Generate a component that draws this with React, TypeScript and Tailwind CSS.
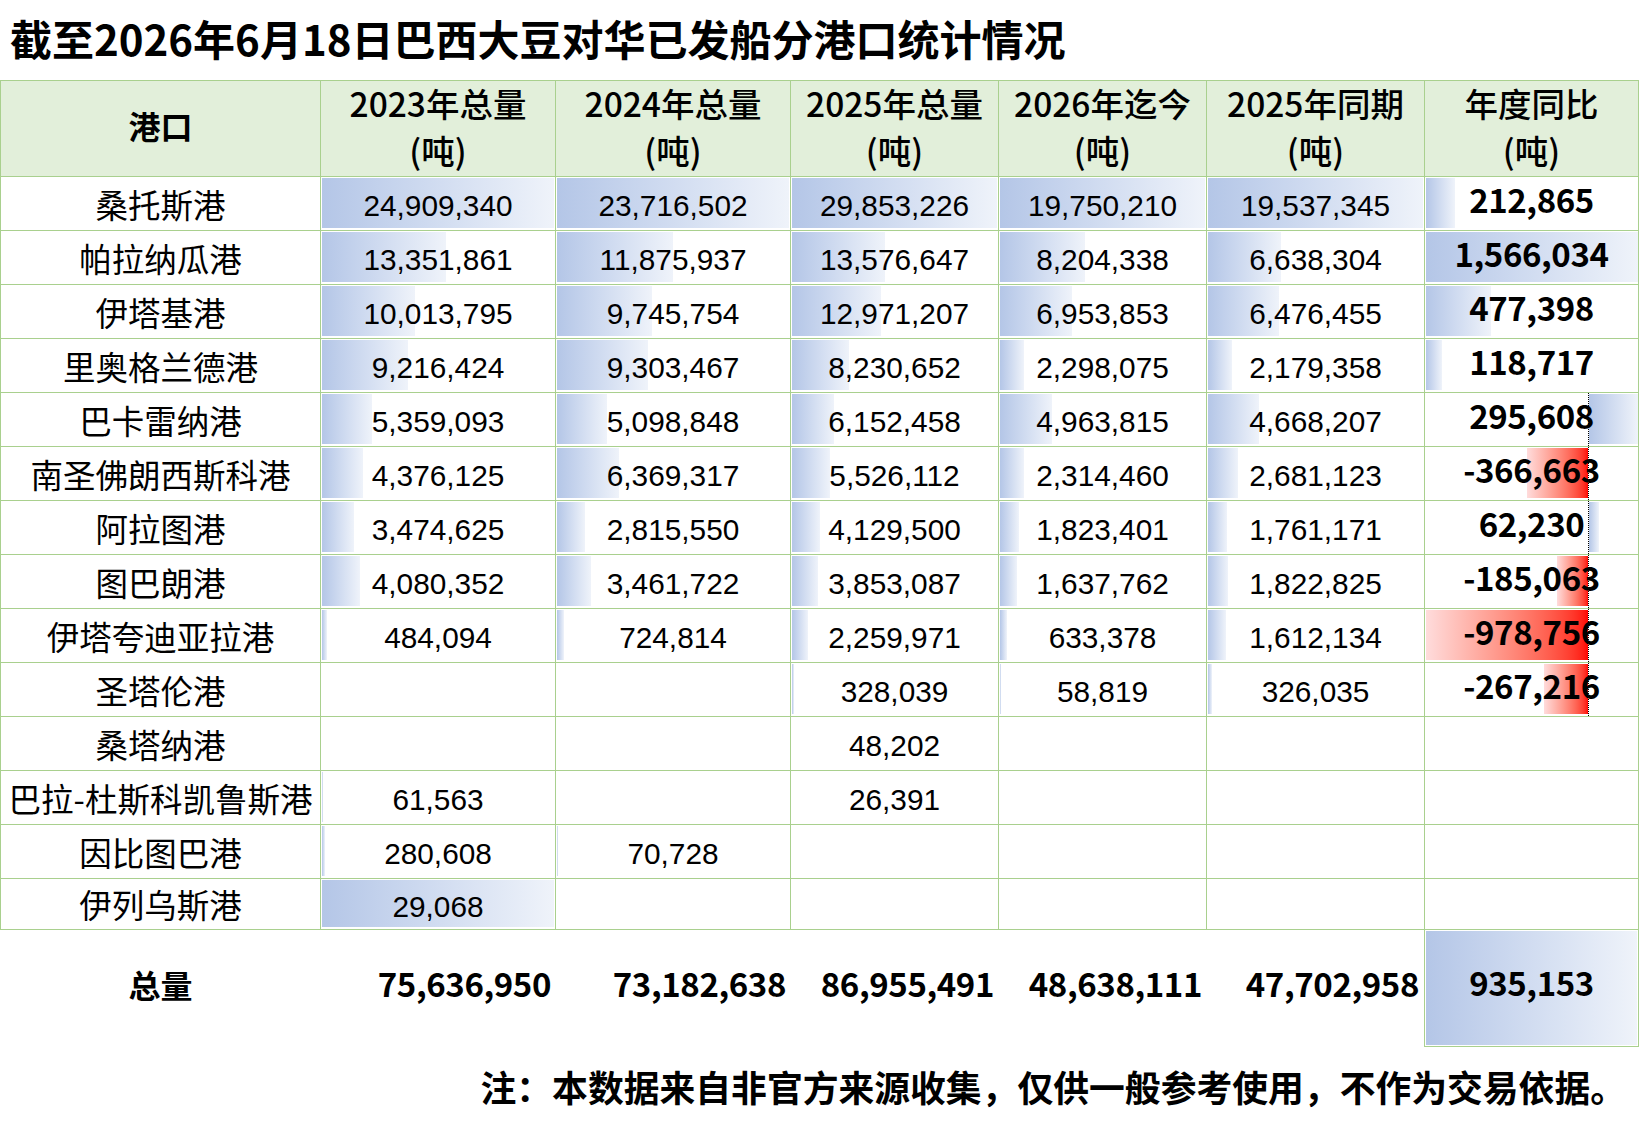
import React from 'react';

type Row = { name: string; vals: (number | null)[]; full?: boolean };

const rows: Row[] = [
  { name: '桑托斯港', vals: [24909340, 23716502, 29853226, 19750210, 19537345, 212865] },
  { name: '帕拉纳瓜港', vals: [13351861, 11875937, 13576647, 8204338, 6638304, 1566034] },
  { name: '伊塔基港', vals: [10013795, 9745754, 12971207, 6953853, 6476455, 477398] },
  { name: '里奥格兰德港', vals: [9216424, 9303467, 8230652, 2298075, 2179358, 118717] },
  { name: '巴卡雷纳港', vals: [5359093, 5098848, 6152458, 4963815, 4668207, 295608] },
  { name: '南圣佛朗西斯科港', vals: [4376125, 6369317, 5526112, 2314460, 2681123, -366663] },
  { name: '阿拉图港', vals: [3474625, 2815550, 4129500, 1823401, 1761171, 62230] },
  { name: '图巴朗港', vals: [4080352, 3461722, 3853087, 1637762, 1822825, -185063] },
  { name: '伊塔夸迪亚拉港', vals: [484094, 724814, 2259971, 633378, 1612134, -978756] },
  { name: '圣塔伦港', vals: [null, null, 328039, 58819, 326035, -267216] },
  { name: '桑塔纳港', vals: [null, null, 48202, null, null, null] },
  { name: '巴拉-杜斯科凯鲁斯港', vals: [61563, null, 26391, null, null, null] },
  { name: '因比图巴港', vals: [280608, 70728, null, null, null, null] },
  { name: '伊列乌斯港', vals: [29068, null, null, null, null, null], full: true },
];

const headers = ['2023年总量', '2024年总量', '2025年总量', '2026年迄今', '2025年同期', '年度同比'];
const colMax = [24909340, 23716502, 29853226, 19750210, 19537345];
const widths = ['w-[235px]', 'w-[235px]', 'w-[208px]', 'w-[208px]', 'w-[218px]'];
const totals = ['75,636,950', '73,182,638', '86,955,491', '48,638,111', '47,702,958'];

const fmt = (n: number) => n.toLocaleString('en-US');

const cell = 'relative shrink-0 flex items-center justify-center border-r border-b border-[#a9d08e]';
const cjk = "font-['Noto_Sans_CJK_SC',sans-serif]";
const latin = "font-['Liberation_Sans','Noto_Sans_CJK_SC',sans-serif]";

// last column: first four rows scale from the left edge, the rest around an axis
const YoyBar: React.FC<{ v: number; idx: number }> = ({ v, idx }) => {
  if (idx < 4) {
    return (
      <div
        className="absolute left-[1px] top-[1px] bottom-[2px] bg-linear-to-r from-[#b4c6e7] to-[#eff3fa]"
        style={{ width: `${(v / 1566034) * 212}px` }}
      />
    );
  }
  const axis = 163;
  return (
    <>
      {v < 0 ? (
        <div
          className="absolute top-[1px] bottom-[2px] bg-linear-to-r from-[#ffdcdc] to-[#ff0000]"
          style={{ left: `${axis - (-v / 978756) * 162}px`, width: `${(-v / 978756) * 162}px` }}
        />
      ) : (
        <div
          className="absolute top-[1px] bottom-[2px] bg-linear-to-r from-[#b4c6e7] to-[#eff3fa]"
          style={{ left: `${axis + 1}px`, width: `${(v / 295608) * 49}px` }}
        />
      )}
      <div className="absolute top-0 bottom-0 left-[163px] border-l border-dotted border-black" />
    </>
  );
};

export default function App() {
  return (
    <div className="w-[1641px] h-[1138px] bg-white text-black overflow-hidden">
      <div className={`h-[80px] flex items-center pl-[10px] pb-[6px] ${cjk} font-bold text-[42px]`}>
        截至2026年6月18日巴西大豆对华已发船分港口统计情况
      </div>

      <div className="w-[1639px] border-t border-l border-[#a9d08e]">
        <div className="flex bg-[#e2efda]">
          <div className={`${cell} w-[320px] h-[96px] pb-[8px] ${cjk} font-bold text-[32px]`}>港口</div>
          {headers.map((h, i) => (
            <div
              key={h}
              className={`${cell} ${i === 5 ? 'w-[214px]' : widths[i]} h-[96px] pb-[6px] flex-col ${cjk} font-medium text-[33.5px] leading-[47px]`}
            >
              <span>{h}</span>
              <span>(吨)</span>
            </div>
          ))}
        </div>

        {rows.map((r, ri) => {
          const h = ri === rows.length - 1 ? 'h-[51px]' : 'h-[54px]';
          return (
            <div key={r.name} className="flex">
              <div className={`${cell} w-[320px] ${h} pt-[1px] ${cjk} text-[32.5px] whitespace-nowrap`}>{r.name}</div>
              {r.vals.slice(0, 5).map((v, ci) => (
                <div key={ci} className={`${cell} ${widths[ci]} ${h} pt-[6px] ${latin} text-[29.8px]`}>
                  {v !== null && (
                    <div
                      className="absolute left-[1px] top-[1px] bottom-[2px] bg-linear-to-r from-[#b4c6e7] to-[#eff3fa]"
                      style={{ width: `calc((100% - 2px) * ${r.full && ci === 0 ? 1 : v / colMax[ci]})` }}
                    />
                  )}
                  {v !== null && <span className="relative">{fmt(v)}</span>}
                </div>
              ))}
              <div className={`${cell} w-[214px] ${h} pb-[8px] ${cjk} font-bold text-[33px] tracking-[-0.4px]`}>
                {r.vals[5] !== null && <YoyBar v={r.vals[5] as number} idx={ri} />}
                {r.vals[5] !== null && <span className="relative">{fmt(r.vals[5] as number)}</span>}
              </div>
            </div>
          );
        })}
      </div>

      <div className={`flex h-[117px] ${cjk} font-bold`}>
        <div className="w-[321px] shrink-0 flex items-center justify-center pb-[10px] text-[32px]">总量</div>
        {totals.map((t, i) => (
          <div
            key={t}
            className={`${i === 4 ? 'w-[217px]' : widths[i]} shrink-0 flex items-center justify-end pr-[5px] pb-[10px] text-[33px] tracking-[-0.4px]`}
          >
            {t}
          </div>
        ))}
        <div className="relative w-[215px] shrink-0 flex items-center justify-center pb-[10px] border-x border-b border-[#a9d08e] text-[33px] tracking-[-0.4px]">
          <div className="absolute inset-x-[1px] top-[1px] bottom-[1px] bg-linear-to-r from-[#b4c6e7] to-[#eff3fa]" />
          <span className="relative">935,153</span>
        </div>
      </div>

      <div className={`mt-[13px] flex justify-end pr-[15px] ${cjk} font-bold text-[35.8px]`}>
        注：本数据来自非官方来源收集，仅供一般参考使用，不作为交易依据。
      </div>
    </div>
  );
}
